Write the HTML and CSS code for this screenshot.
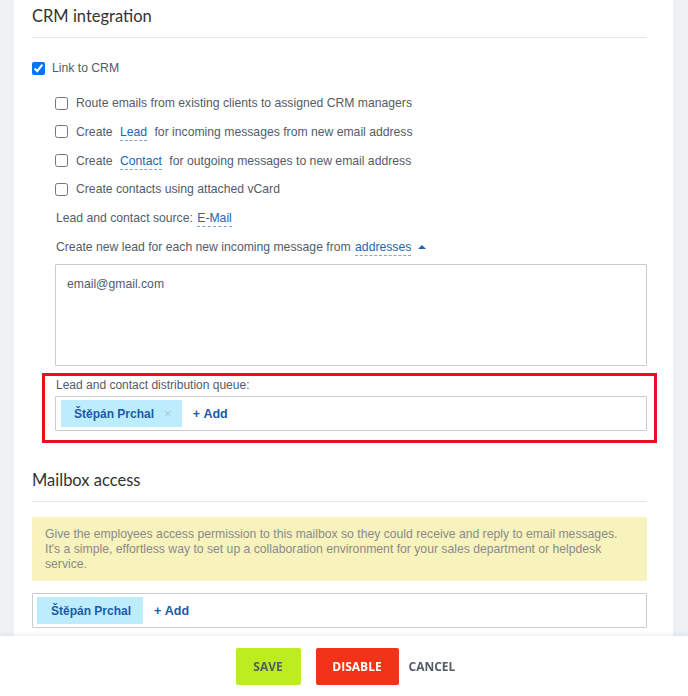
FILE: index.html
```html
<!DOCTYPE html>
<html>
<head>
<meta charset="utf-8">
<link rel="stylesheet" href="styles.css">
</head>
<body>
<div class="panel">
  <h2 class="section-title">CRM integration</h2>
  <label class="row main-row"><input type="checkbox" checked class="cb"><span>Link to CRM</span></label>
  <div class="sub">
    <label class="row opt"><input type="checkbox" class="cb"><span>Route emails from existing clients to assigned CRM managers</span></label>
    <label class="row opt"><input type="checkbox" class="cb"><span>Create <span class="link">Lead</span> for incoming messages from new email address</span></label>
    <label class="row opt"><input type="checkbox" class="cb"><span>Create <span class="link">Contact</span> for outgoing messages to new email address</span></label>
    <label class="row opt"><input type="checkbox" class="cb"><span>Create contacts using attached vCard</span></label>
    <div class="plain">Lead and contact source: <span class="link src">E-Mail</span></div>
    <div class="plain">Create new lead for each new incoming message from <span class="link src">addresses</span><span class="tri"></span></div>
    <div class="textarea">email@gmail.com</div>
    <div class="highlight">
      <div class="label">Lead and contact distribution queue:</div>
      <div class="tagbox">
        <span class="tag">Štěpán Prchal<span class="x">×</span></span>
        <span class="add">+&nbsp;Add</span>
      </div>
    </div>
  </div>
  <h2 class="section-title second">Mailbox access</h2>
  <div class="note">Give the employees access permission to this mailbox so they could receive and reply to email messages. It's a simple, effortless way to set up a collaboration environment for your sales department or helpdesk service.</div>
  <div class="tagbox wide">
    <span class="tag short">Štěpán Prchal</span>
    <span class="add">+&nbsp;Add</span>
  </div>
</div>
<div class="footer">
  <button class="btn save">SAVE</button>
  <button class="btn disable">DISABLE</button>
  <button class="btn cancel">CANCEL</button>
</div>
</body>
</html>
```
FILE: styles.css
```css
html, body {
  margin: 0;
  padding: 0;
  background: #eef2f4;
  height: 100%;
}
body {
  font-family: "Liberation Sans", Arial, sans-serif;
  font-size: 12.2px;
  color: #535c69;
  overflow: hidden;
}
.panel {
  background: #fff;
  margin: 0 15px 0 14px;
  padding: 6px 26px 80px 18px;
  min-height: 700px;
  box-sizing: border-box;
}
.section-title {
  margin: 0;
  font-family: Lato, "Open Sans", sans-serif;
  font-weight: 400;
  font-size: 16.5px;
  line-height: 20px;
  color: #333;
  padding-bottom: 11px;
  border-bottom: 1px solid #e5e6e8;
}
.section-title.second {
  margin-top: 27px;
}
.row {
  display: flex;
  align-items: center;
  height: 20px;
  line-height: 20px;
  white-space: nowrap;
}
.cb {
  width: 13px;
  height: 13px;
  margin: 0 8px 0 0;
  flex: none;
}
.main-row {
  margin-top: 20px;
}
.main-row .cb { margin-right: 7px; }
.sub {
  padding-left: 23px;
}
.opt {
  margin-top: 8.7px;
}
.opt:first-child {
  margin-top: 15.3px;
}
.plain {
  height: 20px;
  line-height: 20px;
  white-space: nowrap;
  margin-top: 8.7px;
  padding-left: 1px;
}
.link {
  color: #2067b0;
  border-bottom: 1px dashed #7fa8d6;
  line-height: 15px;
  display: inline-block;
  margin: 0 4px;
}
.link.src { margin-left: 1px; margin-right: 0; }
.tri {
  display: inline-block;
  width: 0;
  height: 0;
  border-left: 4px solid transparent;
  border-right: 4px solid transparent;
  border-bottom: 4px solid #2067b0;
  margin-left: 7px;
  margin-bottom: 2px;
  vertical-align: middle;
}
.textarea {
  margin-top: 7.5px;
  height: 102px;
  box-sizing: border-box;
  border: 1px solid #c6cdd3;
  border-radius: 1px;
  padding: 11px 11px;
  line-height: 16px;
  color: #535c69;
}
.highlight {
  margin: 7px -10px 0 -13px;
  border: 3px solid #e8101f;
  padding: 1px 7px 9px 10px;
}
.label {
  font-size: 12px;
  line-height: 16px;
  padding-left: 1px;
  margin-bottom: 3px;
}
.tagbox {
  display: flex;
  align-items: center;
  height: 35px;
  box-sizing: border-box;
  border: 1px solid #c6cdd3;
  border-radius: 1px;
  padding: 0 5px;
}
.tag {
  display: inline-flex;
  align-items: center;
  height: 27px;
  background: #bdedfc;
  color: #1b5aa8;
  font-weight: bold;
  font-size: 12px;
  padding: 0 10px 0 13px;
}
.tag .x {
  color: #a9c8d6;
  font-size: 13px;
  font-weight: normal;
  margin-left: 10px;
}
.tag.short {
  padding: 0 13px 0 13px;
}
.add {
  margin-left: 11px;
  color: #1b5aa8;
  font-weight: bold;
  font-size: 12.5px;
}
.note {
  margin-top: 15px;
  background: #f8f3bc;
  border-radius: 2px;
  color: #8a8a8a;
  font-size: 12.2px;
  line-height: 15px;
  padding: 10px 22px 9px 13px;
}
.tagbox.wide {
  margin-top: 12px;
  padding: 0 4px;
}
.tagbox.wide .tag { padding: 0 12px 0 14px; }
.footer {
  position: fixed;
  left: 0;
  right: 0;
  bottom: 0;
  height: 60px;
  background: #fff;
  box-shadow: 0 -2px 4px rgba(0,0,0,0.06);
  display: flex;
  justify-content: center;
  align-items: flex-start;
  padding-top: 12px;
  box-sizing: border-box;
}
.btn {
  font-family: "Open Sans", sans-serif;
  font-weight: bold;
  font-size: 12px;
  height: 37px;
  border: none;
  border-radius: 2px;
  padding: 0;
  margin: 0;
  cursor: pointer;
}
.save {
  width: 65px;
  background: #bbed21;
  color: #535c69;
}
.disable {
  width: 83px;
  margin-left: 15px;
  background: #f2331a;
  color: #fff;
}
.cancel {
  margin-left: 10px;
  background: none;
  color: #535c69;
  width: 44px;
}
```
